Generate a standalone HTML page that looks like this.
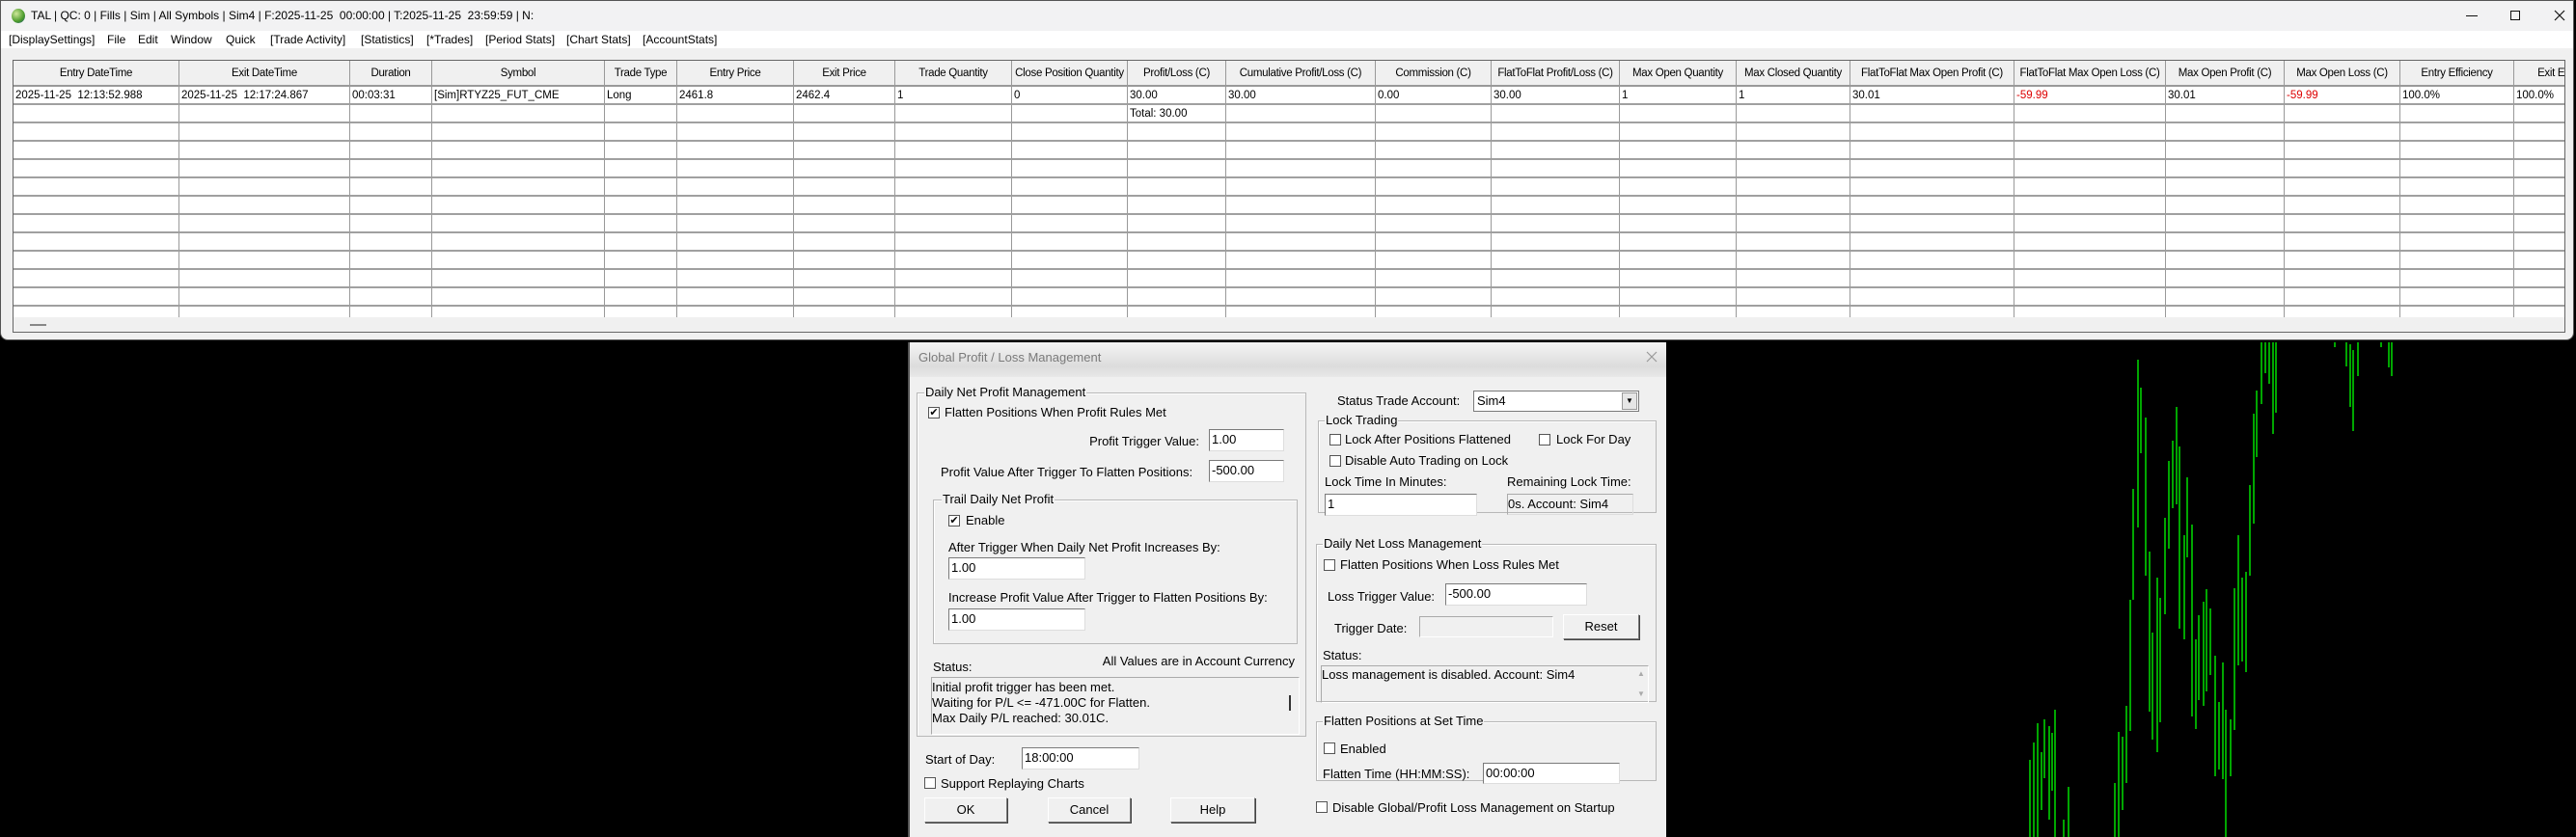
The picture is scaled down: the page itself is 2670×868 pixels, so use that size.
<!DOCTYPE html>
<html><head><meta charset="utf-8"><style>
*{box-sizing:border-box;margin:0;padding:0}
body{width:2670px;height:868px;background:#000;position:relative;overflow:hidden;font-family:"Liberation Sans",Arial,sans-serif;color:#000}
.a{position:absolute;white-space:nowrap}
#win{position:absolute;left:0;top:0;width:2668px;height:353px;background:#f0f0f0;border:1px solid #555;border-radius:0 0 8px 8px}
#title{position:absolute;left:0;top:0;width:100%;height:31px;background:#f2f2f3}
#menu{position:absolute;left:0;top:31px;width:100%;height:18px;background:#fff;font-size:12px}
#tbl{position:absolute;left:12px;top:61px;width:2646px;height:283px;border:1px solid #666;background:#fff;overflow:hidden}
.hd{position:absolute;top:0;height:27px;background:#f0f0f0;border-right:1px solid #999;border-bottom:2px solid #999;font-size:11.5px;text-align:center;line-height:27px;overflow:hidden;white-space:nowrap;letter-spacing:-0.3px}
.c{position:absolute;height:19px;border-right:1px solid #999;border-bottom:2px solid #a0a0a0;font-size:11.5px;line-height:18px;padding-left:2px;overflow:hidden;white-space:nowrap}
#dlg{position:absolute;left:941px;top:355px;width:786px;height:513px;background:#f0f0f0;border-left:2px solid #555;font-size:13px}
.grp{position:absolute;border:1px solid #b8b8b8;box-shadow:1px 1px 0 #fff inset;margin-top:-6px}
.gl{position:absolute;background:#f0f0f0;padding:0 1px;font-size:13px;line-height:14px;margin-top:-6px}
.inp{position:absolute;background:#fff;border:1px solid #7a7a7a;border-right-color:#ddd;border-bottom-color:#ddd;font-size:13px;line-height:19px;padding-left:2px}
.cb{position:absolute;width:12px;height:12px;border:1px solid #555;background:#fff;font-size:11px;line-height:10px;text-align:center;margin-top:-5px}
.btn{position:absolute;border:1px solid #777;border-top-color:#fff;border-left-color:#fff;box-shadow:1px 1px 0 #444;background:#f0f0f0;text-align:center;font-size:13px;line-height:24px}
.t{position:absolute;white-space:nowrap;font-size:13px;line-height:15px;margin-top:-6px}
</style></head><body>
<svg class="a" style="left:0;top:0" width="2670" height="868">
<g stroke="#00ff00" stroke-width="1.3">
<line x1="2104" y1="788" x2="2104" y2="868"/><line x1="2108" y1="770" x2="2108" y2="868"/><line x1="2112" y1="750" x2="2112" y2="868"/><line x1="2116" y1="780" x2="2116" y2="840"/><line x1="2119" y1="746" x2="2119" y2="807"/><line x1="2124" y1="753" x2="2124" y2="850"/><line x1="2127" y1="760" x2="2127" y2="820"/><line x1="2130" y1="736" x2="2130" y2="868"/><line x1="2139" y1="850" x2="2139" y2="868"/><line x1="2144" y1="816" x2="2144" y2="868"/>
<line x1="2192" y1="812" x2="2192" y2="868"/><line x1="2196" y1="759" x2="2196" y2="868"/><line x1="2200" y1="764" x2="2200" y2="840"/><line x1="2204" y1="732" x2="2204" y2="812"/><line x1="2208" y1="622" x2="2208" y2="758"/><line x1="2211" y1="507" x2="2211" y2="622"/><line x1="2216" y1="373" x2="2216" y2="547"/><line x1="2219" y1="402" x2="2219" y2="470"/><line x1="2224" y1="433" x2="2224" y2="597"/><line x1="2228" y1="572" x2="2228" y2="738"/><line x1="2231" y1="656" x2="2231" y2="767"/><line x1="2236" y1="599" x2="2236" y2="780"/><line x1="2239" y1="620" x2="2239" y2="749"/><line x1="2244" y1="537" x2="2244" y2="637"/><line x1="2248" y1="478" x2="2248" y2="569"/><line x1="2252" y1="457" x2="2252" y2="527"/><line x1="2256" y1="422" x2="2256" y2="523"/><line x1="2259" y1="463" x2="2259" y2="652"/><line x1="2264" y1="555" x2="2264" y2="663"/><line x1="2267" y1="495" x2="2267" y2="578"/><line x1="2272" y1="544" x2="2272" y2="743"/><line x1="2276" y1="663" x2="2276" y2="756"/><line x1="2279" y1="638" x2="2279" y2="726"/><line x1="2284" y1="624" x2="2284" y2="732"/><line x1="2287" y1="611" x2="2287" y2="717"/><line x1="2291" y1="631" x2="2291" y2="700"/><line x1="2296" y1="680" x2="2296" y2="805"/><line x1="2300" y1="728" x2="2300" y2="798"/><line x1="2304" y1="687" x2="2304" y2="808"/><line x1="2307" y1="736" x2="2307" y2="868"/><line x1="2312" y1="746" x2="2312" y2="805"/><line x1="2316" y1="610" x2="2316" y2="757"/><line x1="2320" y1="555" x2="2320" y2="690"/><line x1="2324" y1="599" x2="2324" y2="686"/><line x1="2328" y1="593" x2="2328" y2="697"/><line x1="2332" y1="503" x2="2332" y2="597"/><line x1="2336" y1="429" x2="2336" y2="543"/><line x1="2339" y1="405" x2="2339" y2="474"/><line x1="2344" y1="355" x2="2344" y2="419"/><line x1="2348" y1="355" x2="2348" y2="387"/><line x1="2352" y1="355" x2="2352" y2="398"/><line x1="2356" y1="355" x2="2356" y2="450"/><line x1="2359" y1="355" x2="2359" y2="428"/>
<line x1="2420" y1="355" x2="2420" y2="360"/><line x1="2432" y1="355" x2="2432" y2="380"/><line x1="2436" y1="357" x2="2436" y2="422"/><line x1="2439" y1="363" x2="2439" y2="447"/><line x1="2444" y1="355" x2="2444" y2="390"/><line x1="2468" y1="355" x2="2468" y2="360"/><line x1="2476" y1="355" x2="2476" y2="381"/><line x1="2479" y1="355" x2="2479" y2="390"/>
</g></svg>

<div id="win">
 <div id="title">
  <div class="a" style="left:11px;top:8px;width:14px;height:15px;border-radius:50%;background:radial-gradient(circle at 35% 35%,#cfe89a,#4a9a2a 60%,#1c4f8a)"></div>
  <div class="a" style="left:31px;top:8px;font-size:12px">TAL | QC: 0 | Fills | Sim | All Symbols | Sim4 | F:2025-11-25&nbsp; 00:00:00 | T:2025-11-25&nbsp; 23:59:59 | N:</div>
  <div class="a" style="left:2555px;top:15px;width:12px;height:1px;background:#111"></div>
  <div class="a" style="left:2601px;top:10px;width:10px;height:10px;border:1px solid #111"></div>
  <svg class="a" style="left:2646px;top:9px" width="12" height="12"><path d="M1 1L11 11M11 1L1 11" stroke="#111" stroke-width="1.2"/></svg>
 </div>
 <div id="menu">
  <span class="a" style="left:8px;top:2px">[DisplaySettings]</span><span class="a" style="left:110px;top:2px">File</span><span class="a" style="left:142px;top:2px">Edit</span><span class="a" style="left:176px;top:2px">Window</span><span class="a" style="left:233px;top:2px">Quick</span><span class="a" style="left:279px;top:2px">[Trade Activity]</span><span class="a" style="left:373px;top:2px">[Statistics]</span><span class="a" style="left:441px;top:2px">[*Trades]</span><span class="a" style="left:502px;top:2px">[Period Stats]</span><span class="a" style="left:586px;top:2px">[Chart Stats]</span><span class="a" style="left:665px;top:2px">[AccountStats]</span>
 </div>
 <div id="tbl">
 <div id="grid"></div>
 <div class="a" style="left:0;top:266px;width:2646px;height:16px;background:#f0f0f0"></div>
 <div class="a" style="left:17px;top:273px;width:17px;height:2px;background:#888"></div>
 </div>
</div>
<script>
(function(){
var b=[12,184,361,446,625,700,821,926,1047,1167,1269,1424,1544,1677,1798,1916,2086,2243,2366,2486,2604,2720];
var h=["Entry DateTime","Exit DateTime","Duration","Symbol","Trade Type","Entry Price","Exit Price","Trade Quantity","Close Position Quantity","Profit/Loss (C)","Cumulative Profit/Loss (C)","Commission (C)","FlatToFlat Profit/Loss (C)","Max Open Quantity","Max Closed Quantity","FlatToFlat Max Open Profit (C)","FlatToFlat Max Open Loss (C)","Max Open Profit (C)","Max Open Loss (C)","Entry Efficiency","Exit Efficiency"];
var d=["2025-11-25&nbsp; 12:13:52.988","2025-11-25&nbsp; 12:17:24.867","00:03:31","[Sim]RTYZ25_FUT_CME","Long","2461.8","2462.4","1","0","30.00","30.00","0.00","30.00","1","1","30.01","<span style='color:#d00'>-59.99</span>","30.01","<span style='color:#d00'>-59.99</span>","100.0%","100.0%"];
var s="";
for(var i=0;i<h.length;i++){var l=b[i]-12,w=b[i+1]-b[i];
s+='<div class="hd" style="left:'+l+'px;width:'+w+'px">'+h[i]+'</div>';
for(var r=0;r<13;r++){var t='';if(r==0)t=d[i];if(r==1&&i==9)t='Total: 30.00';
s+='<div class="c" style="left:'+l+'px;top:'+(27+r*19)+'px;width:'+w+'px">'+t+'</div>';}}
document.getElementById('grid').innerHTML=s;})();
</script>

<div id="dlg">
 <div class="a" style="left:0;top:0;width:784px;height:36px;background:linear-gradient(#f4f4f4,#dcdcdc 70%,#e8e8e8)"></div>
 <div class="a" style="left:9px;top:8px;color:#7a7a7a;font-size:13px">Global Profit / Loss Management</div>
 <svg class="a" style="left:763px;top:9px" width="12" height="12"><path d="M1 1L11 11M11 1L1 11" stroke="#999" stroke-width="1.2"/></svg>

 <!-- left group -->
 <div class="grp" style="left:7px;top:58px;width:404px;height:357px"></div>
 <div class="gl" style="left:15px;top:51px">Daily Net Profit Management</div>
 <div class="cb" style="left:19px;top:72px">✔</div><div class="t" style="left:36px;top:71px">Flatten Positions When Profit Rules Met</div>
 <div class="t" style="left:0;top:101px;width:300px;text-align:right">Profit Trigger Value:</div>
 <div class="inp" style="left:310px;top:90px;width:78px;height:23px">1.00</div>
 <div class="t" style="left:32px;top:133px">Profit Value After Trigger To Flatten Positions:</div>
 <div class="inp" style="left:310px;top:122px;width:78px;height:23px">-500.00</div>
 <div class="grp" style="left:24px;top:169px;width:378px;height:150px"></div>
 <div class="gl" style="left:33px;top:162px">Trail Daily Net Profit</div>
 <div class="cb" style="left:40px;top:184px">✔</div><div class="t" style="left:58px;top:183px">Enable</div>
 <div class="t" style="left:40px;top:211px">After Trigger When Daily Net Profit Increases By:</div>
 <div class="inp" style="left:40px;top:223px;width:142px;height:23px">1.00</div>
 <div class="t" style="left:40px;top:263px">Increase Profit Value After Trigger to Flatten Positions By:</div>
 <div class="inp" style="left:40px;top:276px;width:142px;height:23px">1.00</div>
 <div class="t" style="left:0;top:329px;width:399px;text-align:right">All Values are in Account Currency</div>
 <div class="t" style="left:24px;top:335px">Status:</div>
 <div class="a" style="left:22px;top:347px;width:382px;height:60px;border:1px solid #aaa;border-right-color:#fff;border-bottom-color:#fff"></div>
 <div class="a" style="left:23px;top:350px;font-size:13px;line-height:16px">Initial profit trigger has been met.<br>Waiting for P/L &lt;= -471.00C for Flatten.<br>Max Daily P/L reached: 30.01C.</div>
 <div class="a" style="left:393px;top:366px;width:2px;height:16px;background:#333"></div>
 <div class="t" style="left:16px;top:431px">Start of Day:</div>
 <div class="inp" style="left:116px;top:420px;width:122px;height:23px">18:00:00</div>
 <div class="cb" style="left:15px;top:456px"></div><div class="t" style="left:32px;top:456px">Support Replaying Charts</div>
 <div class="btn" style="left:15px;top:472px;width:86px;height:26px">OK</div>
 <div class="btn" style="left:143px;top:472px;width:86px;height:26px">Cancel</div>
 <div class="btn" style="left:270px;top:472px;width:88px;height:26px">Help</div>

 <!-- right -->
 <div class="t" style="left:443px;top:59px">Status Trade Account:</div>
 <div class="a" style="left:584px;top:50px;width:172px;height:22px;border:1px solid #7a7a7a;background:#fff;font-size:13px;line-height:20px;padding-left:3px">Sim4<div class="a" style="right:1px;top:1px;width:16px;height:18px;background:#e6e6e6;border:1px solid #999;font-size:8px;line-height:16px;text-align:center">▼</div></div>
 <div class="grp" style="left:423px;top:87px;width:351px;height:96px"></div>
 <div class="gl" style="left:430px;top:80px">Lock Trading</div>
 <div class="cb" style="left:435px;top:100px"></div><div class="t" style="left:451px;top:99px">Lock After Positions Flattened</div>
 <div class="cb" style="left:652px;top:100px"></div><div class="t" style="left:670px;top:99px">Lock For Day</div>
 <div class="cb" style="left:435px;top:122px"></div><div class="t" style="left:451px;top:121px">Disable Auto Trading on Lock</div>
 <div class="t" style="left:430px;top:143px">Lock Time In Minutes:</div>
 <div class="t" style="left:619px;top:143px">Remaining Lock Time:</div>
 <div class="inp" style="left:430px;top:157px;width:158px;height:23px">1</div>
 <div class="a" style="left:619px;top:157px;width:131px;height:22px;border:1px solid #ddd;border-top-color:#aaa;border-left-color:#aaa;font-size:13px;line-height:20px">0s. Account: Sim4</div>

 <div class="grp" style="left:421px;top:215px;width:353px;height:164px"></div>
 <div class="gl" style="left:428px;top:208px">Daily Net Loss Management</div>
 <div class="cb" style="left:429px;top:230px"></div><div class="t" style="left:446px;top:229px">Flatten Positions When Loss Rules Met</div>
 <div class="t" style="left:433px;top:262px">Loss Trigger Value:</div>
 <div class="inp" style="left:555px;top:250px;width:147px;height:23px">-500.00</div>
 <div class="t" style="left:440px;top:295px">Trigger Date:</div>
 <div class="a" style="left:528px;top:284px;width:139px;height:22px;border:1px solid #aaa;border-right-color:#fff;border-bottom-color:#fff"></div>
 <div class="btn" style="left:677px;top:282px;width:79px;height:26px">Reset</div>
 <div class="t" style="left:428px;top:323px">Status:</div>
 <div class="a" style="left:426px;top:335px;width:340px;height:39px;border:1px solid #aaa;border-right-color:#fff;border-bottom-color:#fff"></div>
 <div class="a" style="left:427px;top:337px;font-size:13px;line-height:15px">Loss management is disabled. Account: Sim4</div>
 <div class="a" style="left:754px;top:339px;color:#aaa;font-size:8px">▲</div>
 <div class="a" style="left:754px;top:360px;color:#aaa;font-size:8px">▼</div>

 <div class="grp" style="left:421px;top:399px;width:353px;height:62px"></div>
 <div class="gl" style="left:428px;top:392px">Flatten Positions at Set Time</div>
 <div class="cb" style="left:429px;top:420px"></div><div class="t" style="left:446px;top:420px">Enabled</div>
 <div class="t" style="left:428px;top:446px">Flatten Time (HH:MM:SS):</div>
 <div class="inp" style="left:594px;top:436px;width:142px;height:22px">00:00:00</div>
 <div class="cb" style="left:421px;top:481px"></div><div class="t" style="left:438px;top:481px">Disable Global/Profit Loss Management on Startup</div>
</div>
</body></html>
